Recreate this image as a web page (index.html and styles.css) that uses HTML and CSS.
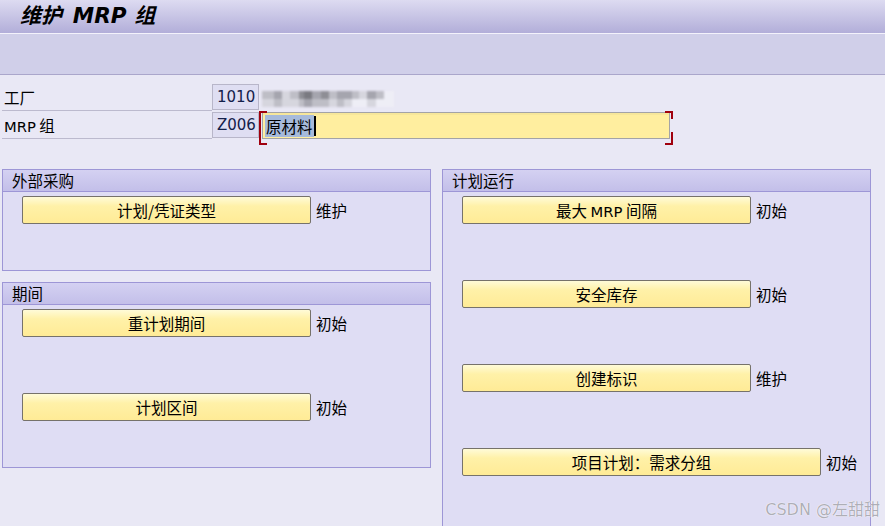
FILE: index.html
```html
<!DOCTYPE html>
<html lang="zh">
<head>
<meta charset="utf-8">
<title>维护 MRP 组</title>
<link rel="stylesheet" href="styles.css">
</head>
<body>
<div class="titlebar"><span class="title">维护 <span class="tlat">MRP</span> 组</span></div>
<div class="toolbar"></div>

<div class="form">
  <div class="frow">
    <span class="flabel">工厂</span>
    <span class="fbox">1010</span>
    <span class="mosaic">
      <span class="mrow">
        <i class="c2 w12"></i><i class="c3 w8"></i><i class="c1 w8"></i><i class="c2 w9"></i><i class="c4 w5"></i><i class="c5 w8"></i><i class="c3 w9"></i><i class="c4 w8"></i><i class="c2 w8"></i><i class="c3 w7"></i><i class="c3 w8"></i><i class="c2 w7"></i><i class="c1 w8"></i><i class="c3 w9"></i><i class="c2 w8"></i><i class="c0 w10"></i>
      </span>
      <span class="mrow">
        <i class="c1 w12"></i><i class="c2 w8"></i><i class="c1 w8"></i><i class="c1 w9"></i><i class="c2 w5"></i><i class="c3 w8"></i><i class="c2 w9"></i><i class="c2 w8"></i><i class="c1 w8"></i><i class="c2 w7"></i><i class="c1 w8"></i><i class="c0 w7"></i><i class="c0 w8"></i><i class="c1 w9"></i><i class="c0 w8"></i><i class="c0 w10"></i>
      </span>
    </span>
  </div>
  <div class="frow">
    <span class="flabel"><span class="lat">MRP</span> 组</span>
    <span class="fbox">Z006</span>
    <span class="inputwrap">
      <span class="input"><span class="sel">原材料</span><span class="caret"></span></span>
    </span>
  </div>
</div>

<div class="main">
  <div class="col">
    <div class="group">
      <div class="ghead">外部采购</div>
      <div class="gbody h-buy">
        <div class="brow"><span class="btn">计划/凭证类型</span><span class="blabel">维护</span></div>
      </div>
    </div>
    <div class="group">
      <div class="ghead">期间</div>
      <div class="gbody h-period">
        <div class="brow"><span class="btn">重计划期间</span><span class="blabel">初始</span></div>
        <div class="brow"><span class="btn">计划区间</span><span class="blabel">初始</span></div>
      </div>
    </div>
  </div>
  <div class="col">
    <div class="group">
      <div class="ghead">计划运行</div>
      <div class="gbody h-run">
        <div class="brow"><span class="btn">最大 <span class="lat">MRP</span> 间隔</span><span class="blabel">初始</span></div>
        <div class="brow"><span class="btn">安全库存</span><span class="blabel">初始</span></div>
        <div class="brow"><span class="btn">创建标识</span><span class="blabel">维护</span></div>
        <div class="brow"><span class="btn wide">项目计划：需求分组</span><span class="blabel">初始</span></div>
      </div>
    </div>
  </div>
</div>

<div class="watermark">CSDN @左甜甜</div>
</body>
</html>
```

FILE: styles.css
```css
* { box-sizing: border-box; }

body {
  margin: 0;
  width: 885px;
  height: 526px;
  overflow: hidden;
  position: relative;
  background: #e9e8f5;
  font-family: "Noto Sans CJK SC", "DejaVu Sans", sans-serif;
  font-size: 15.5px;
  color: #000;
}

.lat { font-family: "DejaVu Sans", "Noto Sans CJK SC", sans-serif; font-size: 0.95em; }

.titlebar {
  height: 34px;
  background: linear-gradient(#dddbf1, #b2aed9);
  border-bottom: 1px solid #f3f2fb;
  display: flex;
  align-items: center;
  padding-left: 20px;
}

.title {
  font-weight: bold;
  font-style: italic;
  font-size: 21px;
  line-height: 1;
  margin-top: -2px;
  word-spacing: 3px;
}
.tlat {
  font-family: "DejaVu Sans", sans-serif;
  font-size: 21.5px;
  font-weight: bold;
  margin-left: 3px;
}

.toolbar {
  height: 41px;
  background: #d0cfe9;
  border-bottom: 1px solid #aaa6cb;
}

.form {
  padding: 9px 0 0 2px;
}

.frow {
  display: flex;
  height: 28px;
  align-items: flex-start;
}

.flabel {
  width: 210px;
  height: 27px;
  border-bottom: 1px solid #bcbace;
  padding-left: 2px;
  line-height: 26px;
}

.fbox {
  width: 47px;
  height: 26px;
  border: 1px solid #b8b6c9;
  background: #dfdef2;
  font-family: "DejaVu Sans", sans-serif;
  font-size: 15px;
  color: #14204a;
  line-height: 24px;
  padding-left: 4px;
}

.mosaic {
  display: flex;
  flex-direction: column;
  margin: 7px 0 0 3px;
  filter: blur(0.8px);
}
.mrow { display: flex; height: 8px; }
.mrow i { display: block; height: 8px; }
.c0 { background: #eeeef6; }
.c1 { background: #d6d6de; }
.c2 { background: #bebec6; }
.c3 { background: #a5a5ae; }
.c4 { background: #8e8e95; }
.c5 { background: #7a7a81; }
.w5 { width: 5px; } .w7 { width: 7px; } .w8 { width: 8px; } .w9 { width: 9px; } .w10 { width: 10px; } .w12 { width: 12px; }

.inputwrap {
  position: relative;
  padding: 0 3px;
  height: 30px;
}
.inputwrap::before {
  content: "";
  position: absolute;
  left: 0;
  top: -1px;
  width: 6px;
  height: 30px;
  border: 2px solid #a0000e;
  border-right: none;
}
.inputwrap::after {
  content: "";
  position: absolute;
  right: 0;
  top: -1px;
  width: 6px;
  height: 30px;
  border-right: 2px solid #a0000e;
  border-top: 2px solid #a0000e;
  border-bottom: 2px solid #a0000e;
  -webkit-mask: linear-gradient(#000 0 8px, transparent 8px 21px, #000 21px);
  mask: linear-gradient(#000 0 8px, transparent 8px 21px, #000 21px);
}

.input {
  display: flex;
  align-items: center;
  width: 408px;
  height: 27px;
  border: 1px solid #a3a3a6;
  background: linear-gradient(#f7e79a 0 2px, #ffee9f 2px);
  padding-left: 2px;
}
.sel {
  background: #a6badb;
  line-height: 22px;
  padding: 0 1px;
}
.caret {
  display: block;
  width: 2px;
  height: 20px;
  background: #000;
}

.main {
  display: flex;
  gap: 11px;
  padding: 29px 0 0 2px;
}

.col {
  width: 429px;
  display: flex;
  flex-direction: column;
  gap: 11px;
}

.group {
  border: 1px solid #9d96d6;
  background: #dfddf4;
}

.ghead {
  height: 22px;
  background: linear-gradient(#d4d1f2, #c3bfe9);
  border-bottom: 1px solid #9d96d6;
  padding-left: 9px;
  line-height: 21px;
}

.gbody {
  padding: 4px 0 0 19px;
}
.h-buy { height: 78px; }
.h-period { height: 162px; }
.h-run { height: 340px; }

.brow {
  display: flex;
  align-items: center;
  gap: 5px;
  height: 28px;
  margin-bottom: 56px;
}

.btn {
  width: 289px;
  height: 28px;
  border: 1px solid #76726a;
  border-radius: 2px;
  background: linear-gradient(#fffbd8, #fff1a8 35%, #ffeb96);
  text-align: center;
  line-height: 26px;
}
.btn.wide { width: 359px; }

.blabel { line-height: 26px; white-space: nowrap; }

.watermark {
  position: absolute;
  right: 5px;
  bottom: 6px;
  font-family: "DejaVu Sans", "Noto Sans CJK SC", sans-serif;
  font-size: 16px;
  color: rgba(160, 160, 170, 0.85);
  text-shadow: 0 0 1px #fff, 0 0 1px #fff;
}
```
